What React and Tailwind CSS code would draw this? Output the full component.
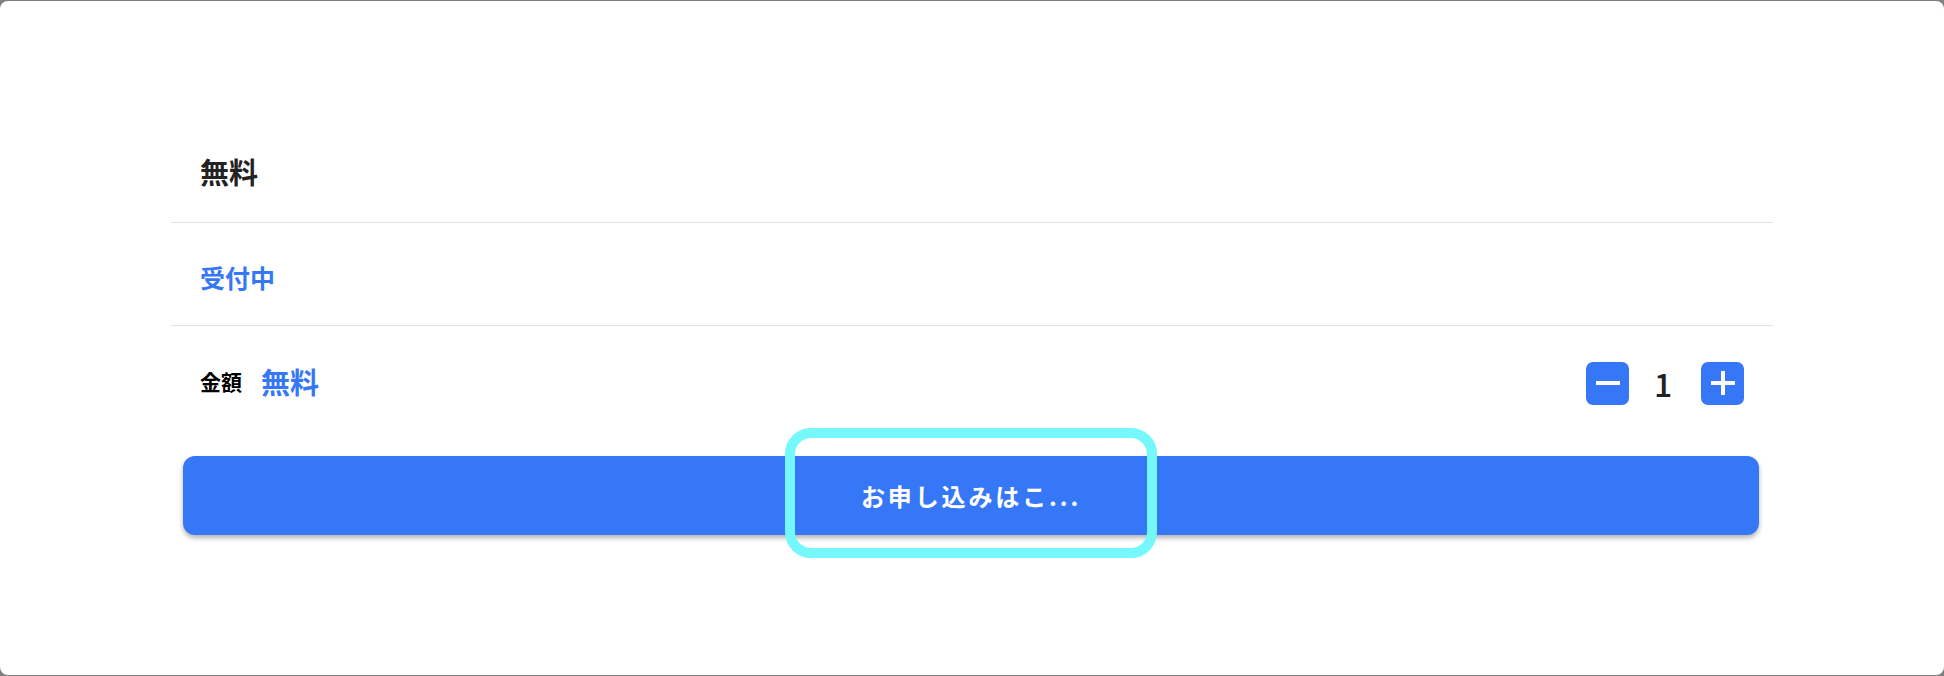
import React, { useState } from "react";

const font = { fontFamily: '"Noto Sans CJK JP", "Noto Sans", sans-serif' };

function Stepper({ value, setValue }) {
  return (
    <div className="flex items-center">
      <button
        onClick={() => setValue((v) => Math.max(1, v - 1))}
        className="flex h-[43px] w-[43px] items-center justify-center rounded-[7px] bg-[#3677f7]"
        aria-label="減らす"
      >
        <svg width="26" height="26" viewBox="0 0 26 26">
          <path d="M1 13h24" stroke="#fff" strokeWidth="4" />
        </svg>
      </button>
      <span className="w-[72px] pr-[4px] text-center text-[32px] font-medium leading-none text-[#222]">{value}</span>
      <button
        onClick={() => setValue((v) => v + 1)}
        className="flex h-[43px] w-[43px] items-center justify-center rounded-[7px] bg-[#3677f7]"
        aria-label="増やす"
      >
        <svg width="26" height="26" viewBox="0 0 26 26">
          <path d="M1 13h24M13 1v24" stroke="#fff" strokeWidth="4" />
        </svg>
      </button>
    </div>
  );
}

export default function App() {
  const [qty, setQty] = useState(1);

  return (
    <div className="h-[676px] w-full bg-[#808080] pt-px" style={font}>
      <div className="h-[674px] w-full rounded-[8px] bg-white px-[171px] pt-[120px]">
        {/* 価格 */}
        <div className="flex h-[102px] items-center border-b border-[#e2e2e2] pl-[29px]">
          <span className="text-[29px] font-bold text-[#222]">無料</span>
        </div>

        {/* 状態 */}
        <div className="flex h-[103px] items-center border-b border-[#e2e2e2] pl-[29px] pt-[7px]">
          <span className="text-[25px] font-bold text-[#3677f7]">受付中</span>
        </div>

        {/* 金額・数量 */}
        <div className="flex h-[114px] items-center justify-between pl-[29px] pr-[29px]">
          <div className="flex items-center pb-[3px]">
            <span className="text-[21px] font-bold text-black">金額</span>
            <span className="ml-[19px] text-[29px] font-bold text-[#3677f7]">無料</span>
          </div>
          <Stepper value={qty} setValue={setQty} />
        </div>

        {/* 申込ボタン */}
        <div className="relative ml-[12px] mr-[14px] mt-4">
          <button className="flex h-[79px] w-full items-center justify-center rounded-[12px] bg-[#3677f7] text-[24px] font-bold tracking-[0.12em] text-white shadow-[0_3px_5px_rgba(0,0,0,0.3)]">
            お申し込みはこ...
          </button>
          <div className="pointer-events-none absolute left-1/2 top-[-28px] h-[130px] w-[372px] -translate-x-1/2 rounded-[26px] border-[10px] border-[#74f8fb]" />
        </div>
      </div>
    </div>
  );
}
